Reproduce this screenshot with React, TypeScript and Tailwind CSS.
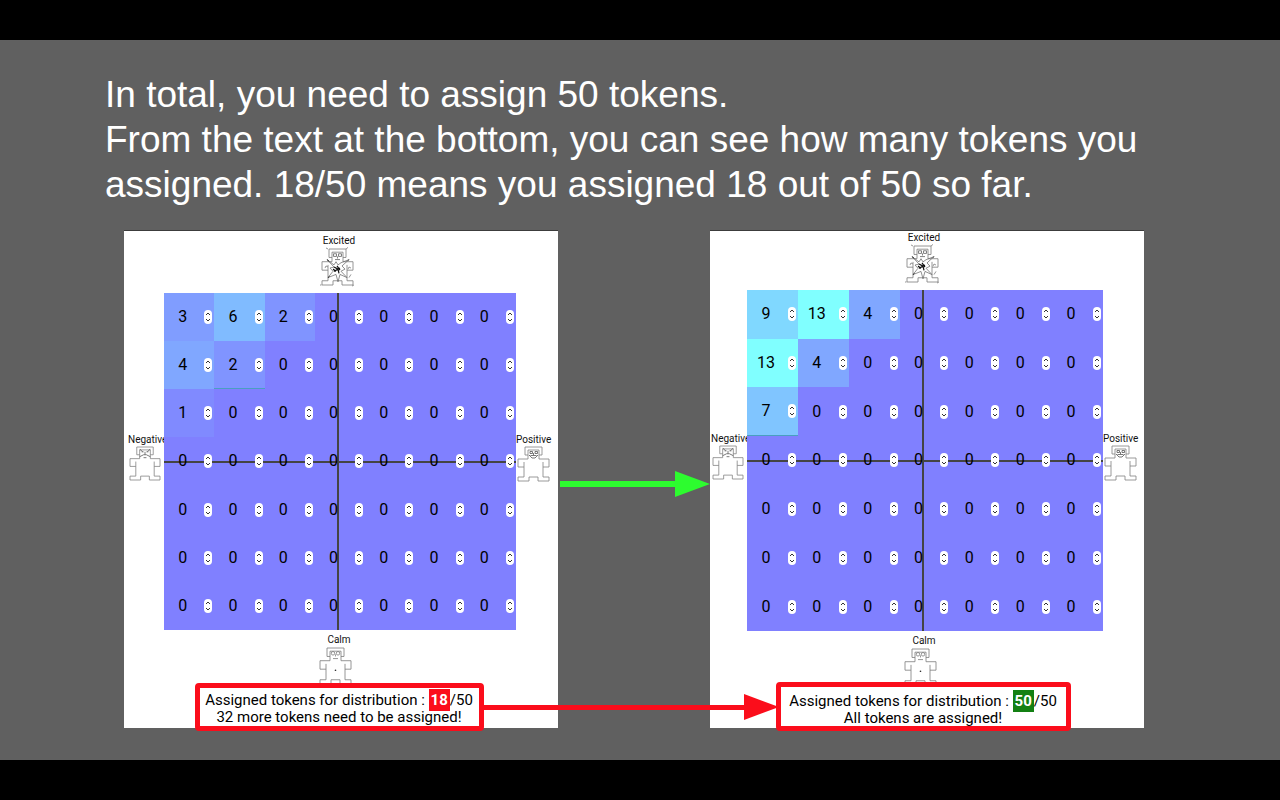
import type { ReactNode } from "react";

type Board = {
  values: number[][];
  marked: string;
  gridClass: string;
  cellClass: string;
  topClass: string;
  bottomClass: string;
  axisXClass: string;
  axisYClass: string;
  sideClass: string;
  noteClass: string;
  badgeClass: string;
  assigned: number;
  message: string;
};

const zeros = [0, 0, 0, 0, 0, 0, 0];

const boards: Board[] = [
  {
    values: [[3, 6, 2, 0, 0, 0, 0], [4, 2, 0, 0, 0, 0, 0], [1, 0, 0, 0, 0, 0, 0], zeros, zeros, zeros, zeros],
    marked: "1-1",
    gridClass: "grid-cols-[40px_minmax(0,1fr)_42px]",
    cellClass: "h-[337px]",
    topClass: "pt-1",
    bottomClass: "h-[53px]",
    axisXClass: "top-[168px]",
    axisYClass: "left-[173px]",
    sideClass: "pl-1",
    noteClass: "mr-1 h-12 w-[289px] pt-1",
    badgeClass: "bg-[#fb0d1b]",
    assigned: 18,
    message: "32 more tokens need to be assigned!",
  },
  {
    values: [[9, 13, 4, 0, 0, 0, 0], [13, 4, 0, 0, 0, 0, 0], [7, 0, 0, 0, 0, 0, 0], zeros, zeros, zeros, zeros],
    marked: "2-0",
    gridClass: "grid-cols-[37px_minmax(0,1fr)_41px]",
    cellClass: "h-[341px]",
    topClass: "pt-px",
    bottomClass: "h-[51px]",
    axisXClass: "top-[170px]",
    axisYClass: "left-[175px]",
    sideClass: "pl-px",
    noteClass: "mr-2 h-[49px] w-[295px] pt-1.5",
    badgeClass: "bg-[#138013]",
    assigned: 50,
    message: "All tokens are assigned!",
  },
];

function Body({ children, className }: { children: ReactNode; className: string }) {
  return (
    <svg
      viewBox="0 0 31 34"
      preserveAspectRatio="none"
      className={`overflow-visible ${className}`}
      fill="none"
      stroke="#808080"
      strokeWidth="0.8"
      aria-hidden="true"
    >
      <path d="M10 8H7V0H24V8H21M10 12V3H21V12M10 12H0V20H6M6 15V30H0V34H11V30H20V34H31V30H25V15M25 20H31V12H21" />
      {children}
    </svg>
  );
}

function Excited() {
  return (
    <Body className="mt-0.5 mr-1 h-9 w-[31px]">
      <path d="M11.5 4.5h3v2.5h-3zM16.5 4.5h3v2.5h-3zM15.5 7v2M13 10h5" stroke="#666" />
      <path
        d="M5 10L12 15L14 12L16 15L19 13L27 10L20 16L23 19L19 21L25 27L18 24L16 31L14 24L6 27L11 21L8 18L12 17Z"
        stroke="#666"
        strokeWidth="0.7"
      />
      <path d="M12 17l4 2M15 16l3 4M12 21l6-3M16 19l1 4M11 19l3 2" stroke="#111" strokeWidth="1.2" />
      <path d="M5 10l2 1.5M26 11l1-1M6 27l1.5-1" stroke="#222" />
      <path d="M4-1l2 1M24 0l2-1.5M-2 34h1.5M30 35l2-1M3 18l1-2 2 1M26 19l1-2 2 1M27 27l2-3" />
    </Body>
  );
}

function Sad() {
  return (
    <Body className="mt-px ml-0.5 h-[33px] w-[30px]">
      <path d="M10 2l3 3M21 2l-3 3M12 5h2M17 5h2M15.5 5v3M10 10l4-2h3l4 2M14 11h3" stroke="#555" />
    </Body>
  );
}

function Happy() {
  return (
    <Body className="mt-px ml-0.5 h-[34px] w-[31px]">
      <path d="M12 4.5h2.5v2h-2.5zM17 4.5h2.5v2h-2.5zM15.5 6v2M11 8l3 3h3l3-3M12.5 8.5h6" stroke="#555" />
    </Body>
  );
}

function Calm() {
  return (
    <Body className="mt-0.5 mr-2 h-9 w-[31px] shrink-0">
      <circle cx="13" cy="5" r="1.7" />
      <circle cx="18" cy="5" r="1.7" />
      <path d="M15.5 6v2M13 10h5" />
      <circle cx="15.5" cy="21" r="0.8" fill="#333" stroke="none" />
    </Body>
  );
}

function StepButton({ label, up }: { label: string; up: boolean }) {
  return (
    <button type="button" aria-label={label} className="h-[7px] w-2">
      <svg viewBox="0 0 8 7" className="h-[7px] w-2" fill="none" stroke="#333" strokeWidth="1">
        <path d={up ? "M2 5L4 3L6 5" : "M2 2L4 4L6 2"} />
      </svg>
    </button>
  );
}

function Cell({ value, name, marked }: { value: number; name: string; marked: boolean }) {
  return (
    <div
      className={`flex min-w-0 items-center pr-0.5 ${marked ? "border-b border-[#4a9fc0]" : ""}`}
      style={{ backgroundColor: `rgb(128, ${Math.round(128 + value * 9.8)}, 255)` }}
    >
      <input
        type="text"
        inputMode="numeric"
        aria-label={name}
        defaultValue={value}
        className="relative z-10 mr-[3px] w-0 min-w-0 flex-1 bg-transparent text-center text-base leading-5 text-black outline-none"
      />
      <div className="relative z-10 flex w-2 flex-col overflow-hidden rounded-full bg-white">
        <StepButton label={`Increase ${name}`} up />
        <StepButton label={`Decrease ${name}`} up={false} />
      </div>
    </div>
  );
}

function Panel({ board }: { board: Board }) {
  return (
    <section className="flex min-w-0 flex-col border-t border-[#3c3c3c] bg-white text-[10px] leading-3 text-[#111]">
      <div className={`grid ${board.gridClass}`}>
        <div className={`col-start-2 flex flex-col items-center pr-0.5 pb-2 ${board.topClass}`}>
          <span>Excited</span>
          <Excited />
        </div>
        <div className={`col-start-1 self-center overflow-hidden pb-[9px] ${board.sideClass}`}>
          <span className="block">Negative</span>
          <Sad />
        </div>
        <div className={`relative grid grid-cols-7 grid-rows-7 ${board.cellClass}`}>
          {board.values.flatMap((row, r) =>
            row.map((value, c) => (
              <Cell
                key={`${r}-${c}`}
                value={value}
                name={`row ${r + 1} column ${c + 1}`}
                marked={board.marked === `${r}-${c}`}
              />
            )),
          )}
          <div className={`absolute left-0 h-0.5 w-full bg-[#444] ${board.axisXClass}`} />
          <div className={`absolute top-0 h-full w-0.5 bg-[#444] ${board.axisYClass}`} />
        </div>
        <div className="self-center pb-2">
          <span className="block">Positive</span>
          <Happy />
        </div>
        <div className={`col-start-2 flex flex-col items-center overflow-hidden pt-1 pr-0.5 ${board.bottomClass}`}>
          <span>Calm</span>
          <Calm />
        </div>
      </div>
      <div
        className={`relative -mb-[3px] self-center overflow-hidden rounded-sm border-[5px] border-[#fb0d1b] bg-white text-center text-[15px] leading-[17px] whitespace-nowrap text-black ${board.noteClass}`}
      >
        <p>
          Assigned tokens for distribution :{" "}
          <span className={`px-0.5 py-0.5 font-bold text-white ${board.badgeClass}`}>{board.assigned}</span>/50
        </p>
        <p>{board.message}</p>
      </div>
    </section>
  );
}

function Arrow({ className, lineClass }: { className: string; lineClass: string }) {
  return (
    <div className={`flex items-center ${className}`}>
      <div className={`flex-1 bg-current ${lineClass}`} />
      <svg viewBox="0 0 35 26" className="h-[26px] w-[35px]" fill="currentColor" aria-hidden="true">
        <path d="M0 0L35 13L0 26Z" />
      </svg>
    </div>
  );
}

export default function App() {
  return (
    <div className="flex min-h-screen flex-col bg-black py-10 font-['Roboto',sans-serif]">
      <main className="flex-1 bg-[#606060] pb-8">
        <h1 className="pt-8 pl-[105px] font-['Liberation_Sans',sans-serif] text-[37px] leading-[45px] text-white">
          In total, you need to assign 50 tokens.
          <br />
          From the text at the bottom, you can see how many tokens you
          <br />
          assigned. 18/50 means you assigned 18 out of 50 so far.
        </h1>
        <div className="relative mt-[23px] mr-[136px] ml-[124px] grid grid-cols-[434fr_152fr_434fr]">
          <Panel board={boards[0]} />
          <Arrow className="pt-2.5 pl-0.5 text-[#2dfc2f]" lineClass="h-1.5" />
          <Panel board={boards[1]} />
          <Arrow className="absolute bottom-2 left-[360px] w-[295px] text-[#fb0d1b]" lineClass="h-[5px]" />
        </div>
      </main>
    </div>
  );
}
